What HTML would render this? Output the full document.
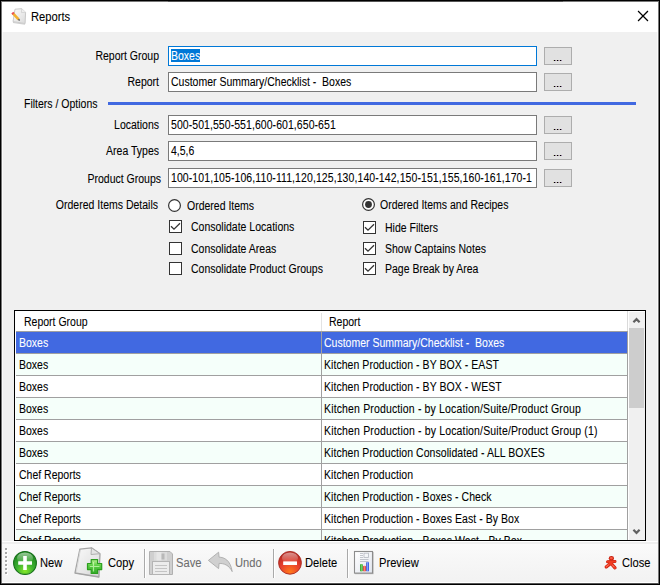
<!DOCTYPE html>
<html><head><meta charset="utf-8">
<style>
*{box-sizing:border-box}
html,body{margin:0;padding:0}
body{width:660px;height:585px;overflow:hidden;position:relative;background:#f0f0f0;font-family:"Liberation Sans",sans-serif;font-size:10.5px;color:#000;-webkit-text-stroke:0.08px currentColor}
.a{position:absolute}
.t{position:absolute;white-space:pre;line-height:14px;font-size:12px;transform:scaleX(0.875);transform-origin:0 0}
.r{text-align:right;transform-origin:100% 0 !important}
.tb{position:absolute;width:369px;height:20px;background:#fff;border:1px solid #7a7a7a}
.btn{position:absolute;width:28px;height:18px;background:#e1e1e1;border:1px solid #adadad}
.btn i{position:absolute;top:12px;width:1px;height:1px;background:#000;box-shadow:1px 0 0 rgba(60,0,90,0.45),-1px 0 0 rgba(120,120,0,0.25)}
.rad{position:absolute;width:13px;height:13px;border:1px solid #333;border-radius:50%;background:#fff}
.chk{position:absolute;width:13px;height:13px;border:1px solid #333;background:#fff}
.row{position:absolute;left:1px;width:612px;height:22px;border-bottom:1px solid #a0a0a0;border-right:1px solid #a0a0a0}
.row.m{background:#f5fffa}
.row.s{background:#4169e1;color:#fff}
.c1{position:absolute;left:3.4px;top:4px;white-space:pre;line-height:14px;font-size:12px;transform:scaleX(0.875);transform-origin:0 0}
.c2{position:absolute;left:308px;top:4px;white-space:pre;line-height:14px;letter-spacing:0.06px;font-size:12px;transform:scaleX(0.875);transform-origin:0 0}
.row .dv{position:absolute;left:305px;top:0;width:1px;height:22px;background:#a0a0a0}
.tt{position:absolute;white-space:pre;line-height:14px;font-size:12px;transform:scaleX(0.93);transform-origin:0 0}
.sep{position:absolute;top:549px;width:1px;height:29px;background:#a9a9a9;box-shadow:1px 0 0 #fff}
</style></head><body>
<!-- window frame -->
<div class="a" style="left:0;top:0;width:660px;height:1px;background:#000"></div>
<div class="a" style="left:1px;top:1px;width:658px;height:1px;background:#777"></div>
<div class="a" style="left:168px;top:1px;width:395px;height:1px;background:#555"></div>
<div class="a" style="left:0;top:0;width:1px;height:585px;background:#000"></div>
<div class="a" style="left:1px;top:1px;width:1px;height:583px;background:#777"></div>
<div class="a" style="left:659px;top:0;width:1px;height:585px;background:#000"></div>
<div class="a" style="left:658px;top:1px;width:1px;height:583px;background:#777"></div>
<div class="a" style="left:0;top:584px;width:660px;height:1px;background:#000"></div>
<div class="a" style="left:1px;top:583px;width:658px;height:1px;background:#555"></div>
<!-- title bar -->
<div class="a" style="left:2px;top:2px;width:656px;height:30px;background:#fff"></div>
<div class="a" style="left:2px;top:32px;width:1px;height:551px;background:#fafafa"></div>
<div class="a" style="left:657px;top:32px;width:1px;height:551px;background:#fafafa"></div>
<svg class="a" style="left:8px;top:6px" width="20" height="20" viewBox="0 0 20 20">
<defs><linearGradient id="gT" x1="0" y1="0" x2="1" y2="1"><stop offset="0" stop-color="#fdfdfd"/><stop offset="1" stop-color="#dadada"/></linearGradient>
<linearGradient id="gPc" x1="0" y1="0" x2="1" y2="0"><stop offset="0" stop-color="#ffd860"/><stop offset="1" stop-color="#e89a18"/></linearGradient></defs>
<path d="M7 3.2L13.7 2.7L17.6 6.3L17.1 17.6L5 15.6Z" fill="url(#gT)" stroke="#c4c4c4" stroke-width="0.9"/>
<path d="M13.7 2.7L13.4 6.6L17.6 6.3" fill="#eeeeee" stroke="#c8c8c8" stroke-width="0.6"/>
<path d="M5 16.3L17 18.1" stroke="#cfcfcf" stroke-width="1.2"/>
<path d="M5.2 7.6L10.6 13.4" stroke="#f2b030" stroke-width="2.6"/>
<path d="M4.3 6.6L5.6 8" stroke="#e85050" stroke-width="2.6"/>
<path d="M10.5 13.3L11.6 14.5" stroke="#555" stroke-width="1.5"/>
</svg>
<div class="tt" style="left:31px;top:10px">Reports</div>
<svg class="a" style="left:636px;top:9px" width="14" height="14"><path d="M2.5 2.5L11.5 11.5M11.5 2.5L2.5 11.5" stroke="#000" stroke-width="1.25" stroke-linecap="square" fill="none"/></svg>

<!-- labels -->
<div class="t r" style="left:39px;width:120px;top:49px">Report Group</div>
<div class="t r" style="left:39px;width:120px;top:75px">Report</div>
<div class="t" style="left:24px;top:97px">Filters / Options</div>
<div class="a" style="left:108px;top:102px;width:528px;height:3px;background:#4169e1"></div>
<div class="t r" style="left:39px;width:120px;top:118px">Locations</div>
<div class="t r" style="left:39px;width:120px;top:144px">Area Types</div>
<div class="t r" style="left:39px;width:122px;top:172px">Product Groups</div>
<div class="t r" style="left:20px;width:138px;top:198px">Ordered Items Details</div>

<!-- textboxes -->
<div class="tb" style="left:168px;top:46px;border-color:#0078d7"><div class="a" style="left:2px;top:2px;width:29px;height:13px;background:#0078d7"></div><div class="t" style="left:2px;top:2px;color:#fff">Boxes</div></div>
<div class="tb" style="left:168px;top:72px"><div class="t" style="left:2px;top:2px">Customer Summary/Checklist -  Boxes</div></div>
<div class="tb" style="left:168px;top:115px"><div class="t" style="left:2px;top:2px;letter-spacing:0.07px">500-501,550-551,600-601,650-651</div></div>
<div class="tb" style="left:168px;top:141px"><div class="t" style="left:2px;top:2px">4,5,6</div></div>
<div class="tb" style="left:168px;top:168px"><div class="a" style="left:0;top:0;width:365px;height:18px;overflow:hidden"><div class="t" style="left:2px;top:2px;letter-spacing:0.1px">100-101,105-106,110-111,120,125,130,140-142,150-151,155,160-161,170-1</div></div></div>

<!-- ... buttons -->
<div class="btn" style="left:544px;top:47px"><i style="left:9px"></i><i style="left:12px"></i><i style="left:15px"></i></div>
<div class="btn" style="left:544px;top:73px"><i style="left:9px"></i><i style="left:12px"></i><i style="left:15px"></i></div>
<div class="btn" style="left:544px;top:116px"><i style="left:9px"></i><i style="left:12px"></i><i style="left:15px"></i></div>
<div class="btn" style="left:544px;top:142px"><i style="left:9px"></i><i style="left:12px"></i><i style="left:15px"></i></div>
<div class="btn" style="left:544px;top:169px"><i style="left:9px"></i><i style="left:12px"></i><i style="left:15px"></i></div>

<!-- radios / checks -->
<svg class="a" style="left:168px;top:199px" width="13" height="13"><circle cx="6.5" cy="6.5" r="5.9" fill="#fff" stroke="#333" stroke-width="1.2"/></svg>
<div class="t" style="left:187px;top:199px">Ordered Items</div>
<svg class="a" style="left:362px;top:198px" width="13" height="13"><circle cx="6.5" cy="6.5" r="5.9" fill="#fff" stroke="#333" stroke-width="1.2"/><circle cx="6.5" cy="6.5" r="3.4" fill="#333"/></svg>
<div class="t" style="left:380px;top:198px">Ordered Items and Recipes</div>

<svg class="a" style="left:169px;top:220px" width="13" height="13"><rect x="0.5" y="0.5" width="12" height="12" fill="#fff" stroke="#333"/><path d="M2 6.2L5 9.2L11 3.2" fill="none" stroke="#333" stroke-width="1.3"/></svg>
<div class="t" style="left:191px;top:220px">Consolidate Locations</div>
<svg class="a" style="left:169px;top:242px" width="13" height="13"><rect x="0.5" y="0.5" width="12" height="12" fill="#fff" stroke="#333"/></svg>
<div class="t" style="left:191px;top:242px">Consolidate Areas</div>
<svg class="a" style="left:169px;top:262px" width="13" height="13"><rect x="0.5" y="0.5" width="12" height="12" fill="#fff" stroke="#333"/></svg>
<div class="t" style="left:191px;top:262px">Consolidate Product Groups</div>

<svg class="a" style="left:363px;top:221px" width="13" height="13"><rect x="0.5" y="0.5" width="12" height="12" fill="#fff" stroke="#333"/><path d="M2 6.2L5 9.2L11 3.2" fill="none" stroke="#333" stroke-width="1.3"/></svg>
<div class="t" style="left:385px;top:221px">Hide Filters</div>
<svg class="a" style="left:363px;top:242px" width="13" height="13"><rect x="0.5" y="0.5" width="12" height="12" fill="#fff" stroke="#333"/><path d="M2 6.2L5 9.2L11 3.2" fill="none" stroke="#333" stroke-width="1.3"/></svg>
<div class="t" style="left:385px;top:242px">Show Captains Notes</div>
<svg class="a" style="left:363px;top:262px" width="13" height="13"><rect x="0.5" y="0.5" width="12" height="12" fill="#fff" stroke="#333"/><path d="M2 6.2L5 9.2L11 3.2" fill="none" stroke="#333" stroke-width="1.3"/></svg>
<div class="t" style="left:385px;top:262px">Page Break by Area</div>

<!-- GRID -->
<div class="a" style="left:14px;top:310px;width:632px;height:231px;border:1px solid #000;background:#fff;overflow:hidden">
<div class="a" style="left:0;top:0;width:613px;height:20px;background:#fff"><div class="c1" style="left:9px;top:4px">Report Group</div><div class="c1" style="left:314px;top:4px">Report</div><div class="a" style="left:306px;top:2px;width:1px;height:18px;background:#e3e3e3"></div></div>
<div class="a" style="left:1px;top:20px;width:612px;height:1px;background:#a0a0a0"></div>
<div class="row s" style="top:21px"><div class="c1">Boxes</div><div class="dv"></div><div class="c2" style="letter-spacing:0">Customer Summary/Checklist -  Boxes</div></div>
<div class="row m" style="top:43px"><div class="c1">Boxes</div><div class="dv"></div><div class="c2">Kitchen Production - BY BOX - EAST</div></div>
<div class="row" style="top:65px"><div class="c1">Boxes</div><div class="dv"></div><div class="c2">Kitchen Production - BY BOX - WEST</div></div>
<div class="row m" style="top:87px"><div class="c1">Boxes</div><div class="dv"></div><div class="c2" style="letter-spacing:0.17px">Kitchen Production - by Location/Suite/Product Group</div></div>
<div class="row" style="top:109px"><div class="c1">Boxes</div><div class="dv"></div><div class="c2" style="letter-spacing:0.176px">Kitchen Production - by Location/Suite/Product Group (1)</div></div>
<div class="row m" style="top:131px"><div class="c1">Boxes</div><div class="dv"></div><div class="c2">Kitchen Production Consolidated - ALL BOXES</div></div>
<div class="row" style="top:153px"><div class="c1">Chef Reports</div><div class="dv"></div><div class="c2">Kitchen Production</div></div>
<div class="row m" style="top:175px"><div class="c1">Chef Reports</div><div class="dv"></div><div class="c2">Kitchen Production - Boxes - Check</div></div>
<div class="row" style="top:197px"><div class="c1">Chef Reports</div><div class="dv"></div><div class="c2">Kitchen Production - Boxes East - By Box</div></div>
<div class="row m" style="top:219px"><div class="c1">Chef Reports</div><div class="dv"></div><div class="c2">Kitchen Production - Boxes West - By Box</div></div>
<div class="a" style="left:612px;top:0;width:1px;height:20px;background:#dadada"></div>
<div class="a" style="left:613px;top:0;width:17px;height:229px;background:#f0f0f0;border-left:1px solid #fff;border-top:1px solid #fff">
<svg class="a" style="left:-1px;top:-1px" width="17" height="17"><path d="M5.4 11.2L8.5 8.1L11.6 11.2" stroke="#606060" stroke-width="2.2" fill="none"/></svg>
<div class="a" style="left:0;top:16px;width:15px;height:80px;background:#cdcdcd"></div>
<svg class="a" style="left:-1px;top:211px" width="17" height="17"><path d="M5.4 6.8L8.5 9.9L11.6 6.8" stroke="#606060" stroke-width="2.2" fill="none"/></svg>
</div>
</div>

<!-- TOOLBAR -->
<div class="a" style="left:2px;top:541px;width:656px;height:42px;background:linear-gradient(#fbfbfb,#f6f6f6 50%,#f2f2f2)"></div>
<div class="a" style="left:2px;top:541px;width:656px;height:1px;background:#fff"></div>
<div class="a" style="left:2px;top:542px;width:656px;height:2px;background:#efefef"></div>
<div class="a" style="left:2px;top:582px;width:656px;height:1px;background:#fff"></div>
<!-- grip -->
<svg class="a" style="left:4px;top:547px" width="5" height="30">
<g fill="#fff"><rect x="2" y="2" width="2" height="2"/><rect x="2" y="6" width="2" height="2"/><rect x="2" y="10" width="2" height="2"/><rect x="2" y="14" width="2" height="2"/><rect x="2" y="18" width="2" height="2"/><rect x="2" y="22" width="2" height="2"/><rect x="2" y="26" width="2" height="2"/></g>
<g fill="#a8a8a8"><rect x="1" y="1" width="2" height="2"/><rect x="1" y="5" width="2" height="2"/><rect x="1" y="9" width="2" height="2"/><rect x="1" y="13" width="2" height="2"/><rect x="1" y="17" width="2" height="2"/><rect x="1" y="21" width="2" height="2"/><rect x="1" y="25" width="2" height="2"/></g>
</svg>
<!-- New icon -->
<svg class="a" style="left:12px;top:550px" width="26" height="26" viewBox="0 0 26 26">
<defs><radialGradient id="gN" cx="0.5" cy="0.85" r="0.75"><stop offset="0" stop-color="#86e82a"/><stop offset="0.5" stop-color="#3cb030"/><stop offset="1" stop-color="#1f8a1f"/></radialGradient>
<linearGradient id="gNh" x1="0" y1="0" x2="0" y2="1"><stop offset="0" stop-color="#fff" stop-opacity="0.55"/><stop offset="1" stop-color="#fff" stop-opacity="0"/></linearGradient></defs>
<circle cx="13" cy="13" r="11.4" fill="url(#gN)" stroke="#17701a" stroke-width="1.1"/>
<ellipse cx="13" cy="8" rx="8" ry="5.5" fill="url(#gNh)"/>
<path d="M11.2 6H14.8V11.2H20V14.8H14.8V20H11.2V14.8H6.2V11.2H11.2Z" fill="#fff"/>
</svg>
<div class="tt" style="left:40px;top:556px">New</div>
<!-- Copy icon -->
<svg class="a" style="left:70px;top:544px" width="36" height="36" viewBox="0 0 36 36">
<defs><linearGradient id="gP" x1="0" y1="0" x2="1" y2="1"><stop offset="0" stop-color="#fafafa"/><stop offset="0.6" stop-color="#e6e6e6"/><stop offset="1" stop-color="#d0d0d0"/></linearGradient>
<linearGradient id="gG" x1="0" y1="0" x2="0" y2="1"><stop offset="0" stop-color="#b8f090"/><stop offset="0.45" stop-color="#58cc40"/><stop offset="1" stop-color="#30a828"/></linearGradient></defs>
<path d="M5.2 29.5L29 33.6L29.3 31.5L6 27.5Z" fill="#bcbcbc"/>
<path d="M9.9 5.2L21.5 3.9L30 9.7L28.9 33L5 29Z" fill="url(#gP)" stroke="#a4a4a4" stroke-width="1.3" stroke-linejoin="round"/>
<path d="M10.3 6L6.3 28" stroke="#d8d8d8" stroke-width="1"/>
<path d="M21.5 3.9L21 10.5L30 9.7Z" fill="#e4e4e4" stroke="#a8a8a8" stroke-width="0.9" stroke-linejoin="round"/>
<path d="M21.2 15.6H27.6V19.5H31.7V25.6H27.6V29.5H21.2V25.6H17.5V19.5H21.2Z" fill="url(#gG)" stroke="#2c9e1e" stroke-width="1.2" stroke-linejoin="round"/>
<path d="M23.5 18V27.5M19.8 22.5H29.5" stroke="#d8ffc0" stroke-width="1.2" opacity="0.7"/>
</svg>
<div class="tt" style="left:108px;top:556px">Copy</div>
<div class="sep" style="left:144px"></div>
<!-- Save icon -->
<svg class="a" style="left:149px;top:551px" width="24" height="24" viewBox="0 0 24 24">
<path d="M0.5 0.5H21L23.5 3V23.5H0.5Z" fill="#cfcfcf" stroke="#b0b0b0"/>
<rect x="5" y="1" width="13" height="8.5" fill="#dcdcdc"/>
<rect x="7.5" y="1" width="5" height="8.5" fill="#e6e6e6"/>
<rect x="12.5" y="2.5" width="3" height="6" fill="#b8b8b8"/>
<rect x="3.5" y="10.5" width="17" height="13" fill="#ececec" stroke="#b4b4b4"/>
<path d="M6 14.5H18M6 17.5H18M6 20.5H18" stroke="#c4c4c4" stroke-width="1"/>
</svg>
<div class="tt" style="left:176px;top:556px;color:#6d6d6d">Save</div>
<!-- Undo icon -->
<svg class="a" style="left:204px;top:546px" width="30" height="30" viewBox="0 0 30 30">
<path d="M4.4 14.4L14.6 6.2L15.1 11.2C20 11.2 26.5 14 28.2 25.6C25 19 20 17.4 15.1 17.4L14.6 22.6Z" fill="#d0d0d0" stroke="#ababab" stroke-width="0.9" stroke-linejoin="round"/>
</svg>
<div class="tt" style="left:235px;top:556px;color:#6d6d6d">Undo</div>
<div class="sep" style="left:273px"></div>
<!-- Delete icon -->
<svg class="a" style="left:277px;top:550px" width="26" height="26" viewBox="0 0 26 26">
<defs><radialGradient id="gD" cx="0.5" cy="0.9" r="0.8"><stop offset="0" stop-color="#ff7a1a"/><stop offset="0.55" stop-color="#e8402e"/><stop offset="1" stop-color="#b82a22"/></radialGradient>
<linearGradient id="gDh" x1="0" y1="0" x2="0" y2="1"><stop offset="0" stop-color="#fff" stop-opacity="0.5"/><stop offset="1" stop-color="#fff" stop-opacity="0"/></linearGradient></defs>
<circle cx="13" cy="12.8" r="11.4" fill="url(#gD)" stroke="#a82820" stroke-width="0.9"/>
<ellipse cx="13" cy="8" rx="8" ry="5.5" fill="url(#gDh)"/>
<rect x="6.2" y="11.4" width="13.8" height="3.6" fill="#fff"/>
</svg>
<div class="tt" style="left:305px;top:556px">Delete</div>
<div class="sep" style="left:347px"></div>
<!-- Preview icon -->
<svg class="a" style="left:353px;top:550px" width="22" height="26" viewBox="0 0 22 26">
<defs><linearGradient id="gV" x1="0" y1="0" x2="1" y2="1"><stop offset="0" stop-color="#fff"/><stop offset="1" stop-color="#e2e6ee"/></linearGradient>
<linearGradient id="bG" x1="0" y1="0" x2="1" y2="0"><stop offset="0" stop-color="#1e8e1e"/><stop offset="0.45" stop-color="#7ad86a"/><stop offset="1" stop-color="#249a24"/></linearGradient>
<linearGradient id="bR" x1="0" y1="0" x2="1" y2="0"><stop offset="0" stop-color="#c81c1c"/><stop offset="0.45" stop-color="#ff8a7a"/><stop offset="1" stop-color="#d42424"/></linearGradient>
<linearGradient id="bB" x1="0" y1="0" x2="1" y2="0"><stop offset="0" stop-color="#1838c0"/><stop offset="0.45" stop-color="#80a0ff"/><stop offset="1" stop-color="#2048d8"/></linearGradient></defs>
<rect x="2" y="2" width="18.6" height="22.2" fill="#b8b8b8"/>
<rect x="1.5" y="1.5" width="18" height="21.6" fill="url(#gV)" stroke="#8c8c8c" stroke-width="1.1"/>
<path d="M7 3.5H10M7 5.5H10M7 7.5H10M7 9.5H15.5M7 11.5H15.5" stroke="#b4b8c0" stroke-width="0.8"/>
<rect x="11" y="3.2" width="4.5" height="4.3" fill="none" stroke="#b4b8c0" stroke-width="0.8"/>
<rect x="7" y="14" width="2.8" height="7.6" rx="1" fill="url(#bG)"/>
<rect x="10.1" y="15.8" width="2.8" height="5.8" rx="1" fill="url(#bR)"/>
<rect x="13.2" y="12" width="2.8" height="9.6" rx="1" fill="url(#bB)"/>
</svg>
<div class="tt" style="left:379px;top:556px">Preview</div>
<!-- Close icon -->
<svg class="a" style="left:601px;top:553px" width="20" height="20" viewBox="0 0 20 20">
<g stroke="#c41a0a" stroke-linecap="round" fill="none">
<path d="M6.6 8.8L14 8.4" stroke-width="3"/>
<path d="M10.8 9.4L5.2 13.9" stroke-width="3.2"/>
<path d="M9 9.2L14 14.9" stroke-width="3.2"/>
</g>
<ellipse cx="10.4" cy="5.3" rx="2.6" ry="2.2" fill="#c41a0a"/>
<g stroke="#f03c22" stroke-linecap="round" fill="none">
<path d="M6.6 8.8L14 8.4" stroke-width="2"/>
<path d="M10.8 9.4L5.2 13.9" stroke-width="2.2"/>
<path d="M9 9.2L14 14.9" stroke-width="2.2"/>
</g>
<ellipse cx="10.4" cy="5.3" rx="1.8" ry="1.4" fill="#f03c22"/>
<g stroke="#ffb0a0" stroke-width="0.7" stroke-linecap="round" fill="none" opacity="0.8">
<path d="M5.6 13.4L7.4 12"/><path d="M11.8 12.4L13 13.8"/><path d="M9.6 5L11 5"/>
</g>
</svg>
<div class="tt" style="left:622px;top:556px">Close</div>
</body></html>
